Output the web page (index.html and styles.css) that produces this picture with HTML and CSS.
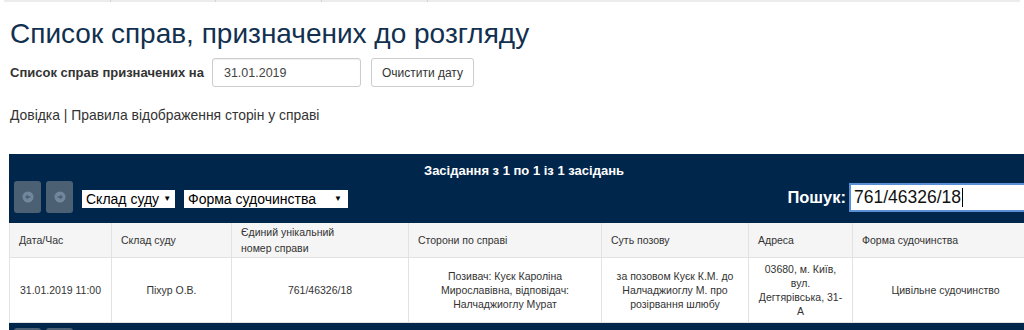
FILE: index.html
```html
<!DOCTYPE html>
<html lang="uk">
<head>
<meta charset="utf-8">
<title>Список справ</title>
<link rel="stylesheet" href="styles.css">
</head>
<body>
<div class="topstrip">
  <span class="seg s1"></span><span class="seg s2"></span><span class="seg s3"></span><span class="seg s4"></span><span class="seg s5"></span>
</div>
<div class="page">
  <h1 class="title">Список справ, призначених до розгляду</h1>
  <div class="daterow">
    <label class="datelabel">Список справ призначених на</label>
    <input class="dateinput" type="text" value="31.01.2019">
    <button class="clearbtn">Очистити дату</button>
  </div>
  <div class="links"><a href="#">Довідка</a> | <a href="#">Правила відображення сторін у справі</a></div>

  <div class="panel">
    <div class="info">Засідання з 1 по 1 із 1 засідань</div>
    <div class="toolbar">
      <div class="nav">
        <span class="navbtn"><svg width="12" height="12" viewBox="0 0 12 12"><circle cx="6" cy="6" r="5.5" fill="#71879b"/><path d="M8.5 6H4M5.8 4.2L4 6l1.8 1.8" stroke="#4b6073" stroke-width="1.4" fill="none"/></svg></span>
        <span class="navbtn"><svg width="12" height="12" viewBox="0 0 12 12"><circle cx="6" cy="6" r="5.5" fill="#71879b"/><path d="M3.5 6H8M6.2 4.2L8 6 6.2 7.8" stroke="#4b6073" stroke-width="1.4" fill="none"/></svg></span>
      </div>
      <div class="sel sel1"><span>Склад суду</span><span class="caret">▼</span></div>
      <div class="sel sel2"><span>Форма судочинства</span><span class="caret">▼</span></div>
      <div class="search"><span class="searchlabel">Пошук:</span><span class="searchinput">761/46326/18<span class="cursor"></span></span></div>
    </div>
    <table class="grid">
      <colgroup>
        <col class="c1"><col class="c2"><col class="c3"><col class="c4"><col class="c5"><col class="c6"><col class="c7">
      </colgroup>
      <thead>
        <tr>
          <th>Дата/Час</th>
          <th>Склад суду</th>
          <th>Єдиний унікальний<br>номер справи</th>
          <th>Сторони по справі</th>
          <th>Суть позову</th>
          <th>Адреса</th>
          <th>Форма судочинства</th>
        </tr>
      </thead>
      <tbody>
        <tr>
          <td>31.01.2019 11:00</td>
          <td>Піхур О.В.</td>
          <td>761/46326/18</td>
          <td>Позивач: Куєк Кароліна Мирославівна, відповідач: Налчаджиоглу Мурат</td>
          <td>за позовом Куєк К.М. до Налчаджиоглу М. про розірвання шлюбу</td>
          <td>03680, м. Київ, вул. Дегтярівська, 31-А</td>
          <td>Цивільне судочинство</td>
        </tr>
      </tbody>
    </table>
    <div class="footer">
      <div class="nav">
        <span class="navbtn"></span>
        <span class="navbtn"></span>
      </div>
    </div>
  </div>
</div>
</body>
</html>
```
FILE: styles.css
```css
html { overflow: hidden; }
body {
  margin: 0;
  font-family: "Liberation Sans", Arial, Helvetica, sans-serif;
  color: #333;
  background: #fff;
}
.topstrip {
  display: flex;
  margin: 0 4px;
  height: 2px;
  background: #ececec;
}
.seg { height: 2px; border-right: 1px solid #d4d4d4; }
.s1 { width: 106px; }
.s2 { width: 104px; }
.s3 { width: 105px; }
.s4 { width: 105px; }
.s5 { flex: 1; border-right: none; }
.page { padding: 0 0 0 9px; }
.title {
  margin: 16px 0 0 1px;
  font-size: 28px;
  font-weight: normal;
  line-height: 32px;
  color: #12304f;
}
.daterow {
  display: flex;
  align-items: center;
  margin-top: 8px;
  margin-left: 1px;
}
.datelabel {
  font-size: 13px;
  font-weight: bold;
  color: #333;
  margin-right: 8px;
}
.dateinput {
  box-sizing: border-box;
  width: 149px;
  height: 29px;
  border: 1px solid #ccc;
  border-radius: 3px;
  padding: 0 11px;
  font-family: inherit;
  font-size: 12.5px;
  color: #444;
  box-shadow: inset 0 1px 1px rgba(0,0,0,0.06);
}
.clearbtn {
  box-sizing: border-box;
  height: 29px;
  margin-left: 10px;
  padding: 0 10px;
  border: 1px solid #ccc;
  border-radius: 3px;
  background: #fff;
  font-family: inherit;
  font-size: 12px;
  color: #333;
}
.links {
  margin: 19px 0 0 1px;
  font-size: 13.9px;
  line-height: 18px;
  color: #333;
}
.links a { color: #333; text-decoration: none; }
.panel {
  margin-top: 30px;
  width: 1030px;
  background: #00264c;
}
.info {
  padding-top: 8px;
  text-align: center;
  color: #fff;
  font-weight: bold;
  font-size: 13px;
  line-height: 18px;
}
.toolbar {
  display: flex;
  align-items: center;
  height: 34px;
  padding: 0 0 9px 5px;
}
.nav { display: flex; gap: 5px; }
.navbtn {
  width: 27px;
  height: 32px;
  border-radius: 3px;
  background: #4b6073;
  display: flex;
  align-items: center;
  justify-content: center;
}
.sel {
  box-sizing: border-box;
  height: 18px;
  background: #fff;
  color: #000;
  font-size: 14px;
  line-height: 18px;
  padding: 0 4px;
  display: flex;
  align-items: center;
  justify-content: space-between;
  white-space: nowrap;
  margin-top: 4px;
}
.sel1 { width: 93px; margin-left: 9px; }
.sel2 { width: 164px; margin-left: 9px; }
.caret { font-size: 8px; padding-left: 4px; padding-right: 2px; }
.search {
  margin-left: auto;
  display: flex;
  align-items: center;
  margin-top: 1px;
}
.searchlabel {
  color: #fff;
  font-weight: bold;
  font-size: 16.5px;
  margin-right: 3px;
}
.searchinput {
  box-sizing: border-box;
  width: 190px;
  height: 29px;
  border: 2px solid #5a8fd6;
  background: #fff;
  color: #111;
  font-size: 17.5px;
  padding: 0 3px;
  display: flex;
  align-items: center;
}
.cursor {
  display: inline-block;
  width: 1px;
  height: 19px;
  background: #000;
  margin-left: 1px;
}
.grid {
  width: 100%;
  table-layout: fixed;
  border-collapse: collapse;
  background: #fff;
  font-size: 10.5px;
  color: #333;
}
.c1 { width: 102px; }
.c2 { width: 120px; }
.c3 { width: 177px; }
.c4 { width: 193px; }
.c5 { width: 147px; }
.c6 { width: 104px; }
.c7 { width: auto; }
.grid th {
  background: #f5f5f5;
  text-align: left;
  font-weight: normal;
  line-height: 16px;
  padding: 1px 10px 1px 9px;
  border: 1px solid #e2e2e2;
  border-top: none;
  height: 32px;
}
.grid td {
  text-align: center;
  line-height: 14px;
  padding: 4px 8px;
  border: 1px solid #e2e2e2;
  height: 56px;
}
.footer {
  padding: 5px 0 5px 5px;
}
```
